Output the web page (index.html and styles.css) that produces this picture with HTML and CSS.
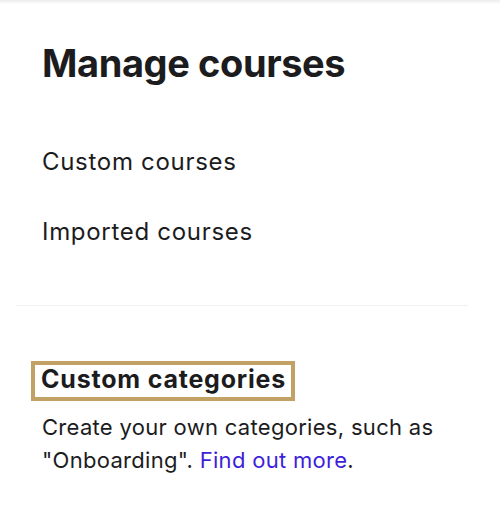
FILE: index.html
```html
<!DOCTYPE html>
<html lang="en">
<head>
    <meta charset="UTF-8">
    <meta name="viewport" content="width=device-width, initial-scale=1.0">
    <title>Manage courses</title>
    <link rel="stylesheet" href="styles.css">
</head>
<body>
    <div class="top-shade"></div>

    <div class="manage">
        <h1>Manage courses</h1>
        <ul class="course-links">
            <li><a href="#">Custom courses</a></li>
            <li><a href="#">Imported courses</a></li>
        </ul>
    </div>

    <hr class="divider">

    <div class="categories">
        <h2 class="focused">Custom categories</h2>
        <p>Create your own categories, such as "Onboarding". <a href="#" class="link">Find out more</a>.</p>
    </div>
</body>
</html>
```

FILE: styles.css
```css
body {
    margin: 0;
    font-family: Inter, "Noto Sans", sans-serif;
    color: #1c1c1e;
    background-color: #fff;
}
.top-shade {
    height: 4px;
    background: linear-gradient(#ececec, #fff);
}
.manage {
    padding: 36px 32px 0 42px;
}
h1 {
    margin: 0;
    font-size: 38px;
    line-height: 46px;
    font-weight: 700;
    letter-spacing: -0.4px;
}
.course-links {
    list-style: none;
    margin: 41px 0 0;
    padding: 0;
}
.course-links li {
    padding: 21px 0;
}
.course-links a {
    display: block;
    color: #1c1c1e;
    text-decoration: none;
    font-size: 24px;
    line-height: 28px;
    letter-spacing: 0.7px;
}
.divider {
    border: none;
    border-top: 1px solid #f1f1f1;
    margin: 38px 32px 0 16px;
}
.categories {
    padding: 55px 32px 0 31px;
}
.focused {
    display: inline-block;
    margin: 0;
    padding: 0 5px 4px 6px;
    border: 4px solid #c2a264;
    font-size: 25px;
    line-height: 28px;
    font-weight: 700;
    letter-spacing: 0.8px;
}
.categories p {
    margin: 10px 0 0 11px;
    font-size: 22px;
    line-height: 33px;
    letter-spacing: 0.3px;
}
.link {
    color: #3d1fd9;
    text-decoration: none;
}
```
